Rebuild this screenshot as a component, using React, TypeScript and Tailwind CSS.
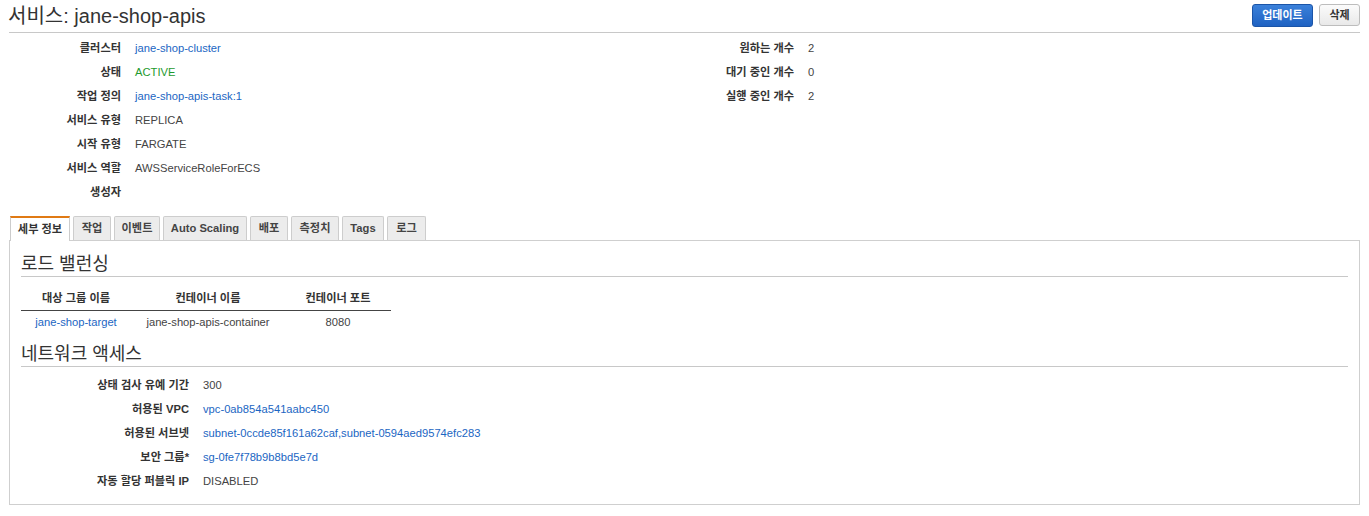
import React from "react";

const link = "text-[#1b66c3]";

function Row({ label, value, cls = "", lw }: { label: string; value?: string; cls?: string; lw: string }) {
  return (
    <div className="flex h-[24px] items-center">
      <div className={`${lw} shrink-0 text-right font-bold text-[#333]`}>{label}</div>
      <div className={`ml-[14px] ${cls}`}>{value}</div>
    </div>
  );
}

const tabs: { t: string; w: string; active?: boolean }[] = [
  { t: "세부 정보", w: "w-[60px]", active: true },
  { t: "작업", w: "w-[38px]" },
  { t: "이벤트", w: "w-[46px]" },
  { t: "Auto Scaling", w: "w-[84px]" },
  { t: "배포", w: "w-[38px]" },
  { t: "측정치", w: "w-[48px]" },
  { t: "Tags", w: "w-[42px]" },
  { t: "로그", w: "w-[39px]" },
];

export default function App() {
  return (
    <div className="w-[1369px] h-[516px] bg-white text-[11.2px] leading-none text-[#444] font-['Liberation_Sans','Noto_Sans_CJK_KR',sans-serif]">
      <div className="mx-[9px] flex h-[33px] items-center justify-between border-b border-[#c8c8c8]">
        <h1 className="-ml-[1px] text-[20px] font-normal text-[#333]">서비스: jane-shop-apis</h1>
        <div className="flex items-center gap-[6px] -mt-[2px]">
          <button className="h-[23px] w-[61px] rounded-[3px] border border-[#1b55a8] bg-gradient-to-b from-[#3b81da] to-[#1f62c2] text-[11px] font-bold text-white">
            업데이트
          </button>
          <button className="h-[22px] w-[41px] rounded-[3px] border border-[#bdbdbd] bg-gradient-to-b from-[#fbfbfb] to-[#e9e9e9] text-[11px] font-bold text-[#333]">
            삭제
          </button>
        </div>
      </div>

      <div className="mx-[9px] mt-[4px] flex">
        <div className="w-[675px]">
          <Row lw="w-[112px]" label="클러스터" value="jane-shop-cluster" cls={link} />
          <Row lw="w-[112px]" label="상태" value="ACTIVE" cls="text-[#1f9a2f]" />
          <Row lw="w-[112px]" label="작업 정의" value="jane-shop-apis-task:1" cls={link} />
          <Row lw="w-[112px]" label="서비스 유형" value="REPLICA" />
          <Row lw="w-[112px]" label="시작 유형" value="FARGATE" />
          <Row lw="w-[112px]" label="서비스 역할" value="AWSServiceRoleForECS" />
          <Row lw="w-[112px]" label="생성자" value="" />
        </div>
        <div className="w-[675px]">
          <Row lw="w-[110px]" label="원하는 개수" value="2" />
          <Row lw="w-[110px]" label="대기 중인 개수" value="0" />
          <Row lw="w-[110px]" label="실행 중인 개수" value="2" />
        </div>
      </div>

      <div className="mx-[9px] mt-[11px]">
        <div className="ml-[1px] flex gap-[3px]">
          {tabs.map((t) =>
            t.active ? (
              <div
                key={t.t}
                className={`${t.w} relative z-10 -mb-[1px] flex h-[25px] items-center justify-center border-x border-t-2 border-x-[#ccc] border-t-[#e07a14] bg-white font-bold text-[#333]`}
              >
                {t.t}
              </div>
            ) : (
              <div
                key={t.t}
                className={`${t.w} flex h-[24px] items-center justify-center border border-b-0 border-[#cdcdcd] bg-[#ececec] font-bold text-[#444] rounded-t-[2px]`}
              >
                {t.t}
              </div>
            )
          )}
        </div>
        <div className="h-[265px] border border-[#cfcfcf] px-[11px] pt-[11px]">
          <h2 className="flex h-[25px] items-center border-b border-[#c8c8c8] text-[18px] font-normal text-[#333]">로드 밸런싱</h2>
          <div className="mt-[10px] w-[370px]">
            <div className="flex h-[24px] items-center border-b border-[#444] font-bold text-[#333]">
              <div className="w-[110px] text-center">대상 그룹 이름</div>
              <div className="w-[154px] text-center">컨테이너 이름</div>
              <div className="w-[106px] text-center">컨테이너 포트</div>
            </div>
            <div className="flex h-[24px] items-center">
              <div className={`w-[110px] text-center ${link}`}>jane-shop-target</div>
              <div className="w-[154px] text-center">jane-shop-apis-container</div>
              <div className="w-[106px] text-center">8080</div>
            </div>
          </div>
          <h2 className="mt-[7px] flex h-[25px] items-center border-b border-[#c8c8c8] text-[18px] font-normal text-[#333]">네트워크 액세스</h2>
          <div className="mt-[7px]">
            <Row lw="w-[168px]" label="상태 검사 유예 기간" value="300" />
            <Row lw="w-[168px]" label="허용된 VPC" value="vpc-0ab854a541aabc450" cls={link} />
            <Row lw="w-[168px]" label="허용된 서브넷" value="subnet-0ccde85f161a62caf,subnet-0594aed9574efc283" cls={link} />
            <Row lw="w-[168px]" label="보안 그룹*" value="sg-0fe7f78b9b8bd5e7d" cls={link} />
            <Row lw="w-[168px]" label="자동 할당 퍼블릭 IP" value="DISABLED" />
          </div>
        </div>
      </div>
    </div>
  );
}
